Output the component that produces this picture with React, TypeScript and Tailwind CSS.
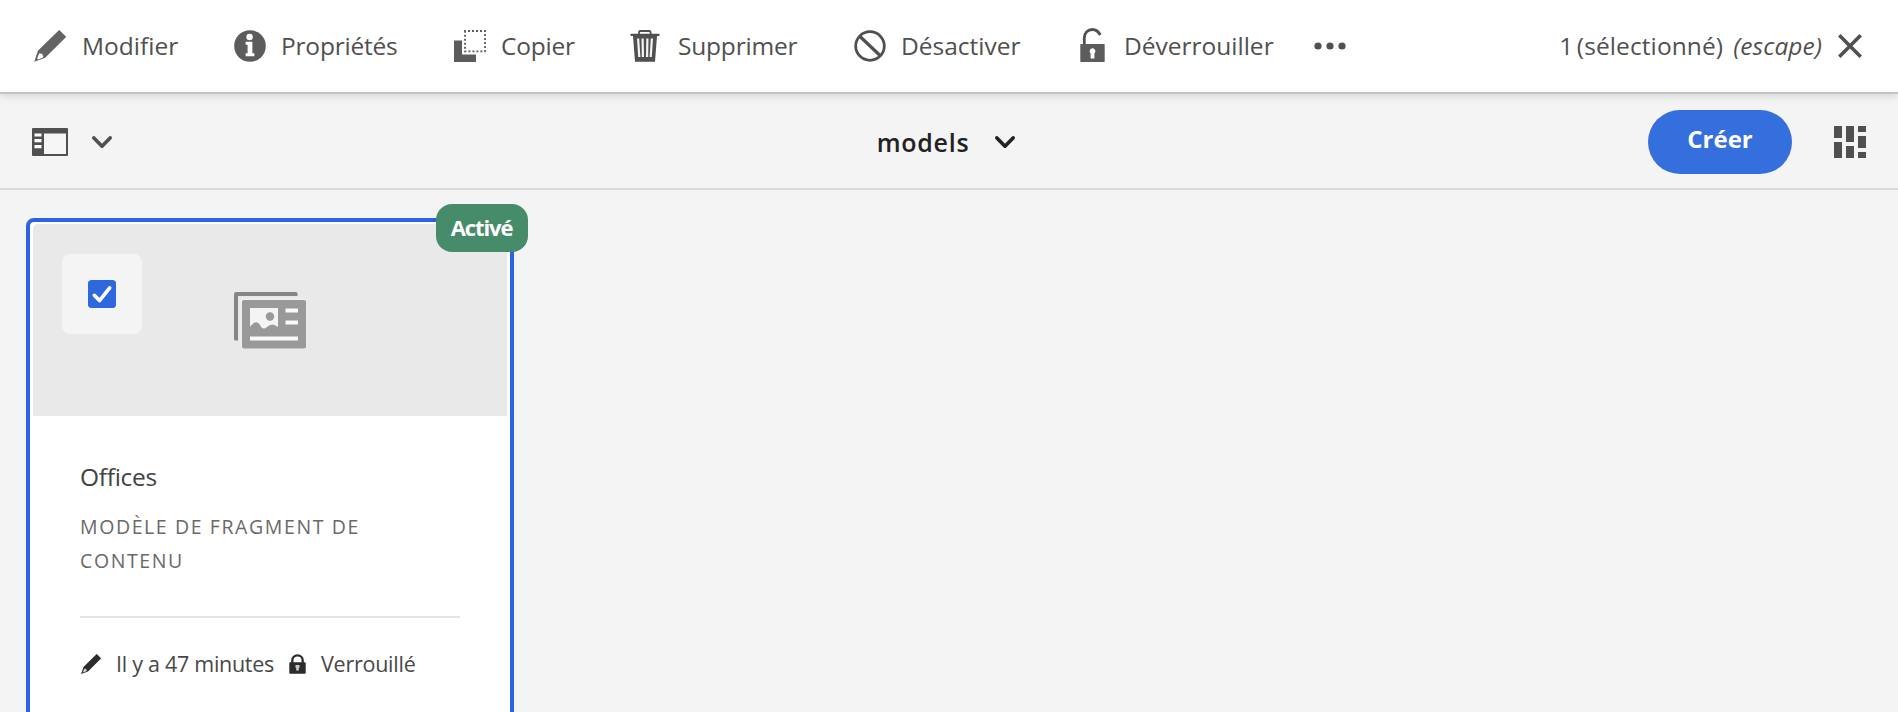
import type { ReactNode } from "react";

function Pencil({ className, tip }: { className: string; tip: string }) {
  return (
    <svg viewBox="0 0 32 32" className={className} fill="currentColor">
      <path d="M24.600 0.500a0.800 0.800 0 0 1 1.200 0L31.600 6.300a0.800 0.800 0 0 1 0 1.200L11.200 27.800 0.300 31.800 3.900 20.800Z" />
      <path d="M5.300 23.200 8.300 24 9.400 27.200 4.200 29.400 3.200 28.400Z" fill={tip} />
    </svg>
  );
}

function InfoIcon() {
  return (
    <svg viewBox="0 0 32 32" className="size-8 shrink-0 text-[#5c5c5c]">
      <circle cx="16" cy="16" r="15.800" fill="currentColor" />
      <circle cx="15.600" cy="7" r="3.200" fill="#fff" />
      <path d="M11.600 11.800h6.800v11.400h2v3H11.600v-3h2V14.800h-2z" fill="#fff" />
    </svg>
  );
}

function CopyIcon() {
  return (
    <svg viewBox="0 0 32 32" className="size-8 shrink-0 text-[#5c5c5c]">
      <path d="M0 10.500h8V24.500h14V32H0z" fill="currentColor" />
      <rect x="11" y="1" width="20" height="20.400" fill="none" stroke="currentColor" strokeWidth="1.800" strokeDasharray="2 2" strokeDashoffset="1" />
    </svg>
  );
}

function TrashIcon() {
  return (
    <svg viewBox="0 0 30 32" className="h-8 w-[30px] shrink-0" fill="none">
      <path d="M9 4.200V2.200Q9 1 10.200 1h9Q20.600 1 20.600 2.200V4.200" stroke="currentColor" strokeWidth="1.800" />
      <path d="M0.500 3.800H29.500V6H27L25 31.800H5L3 6H0.500z" fill="currentColor" />
      <path d="M8.100 8.500 9.300 27M12.600 8.500 12.900 27M17.400 8.500 17.100 27M21.900 8.500 20.700 27" stroke="#f4f4f4" strokeWidth="2.200" />
    </svg>
  );
}

function BanIcon() {
  return (
    <svg viewBox="0 0 32 32" className="size-8 shrink-0" fill="none" stroke="currentColor" strokeWidth="2.800">
      <circle cx="16" cy="16" r="14.300" />
      <path d="M6 6.500 26 25.500" strokeWidth="3.200" />
    </svg>
  );
}

function UnlockIcon() {
  return (
    <svg viewBox="0 0 25 35" className="mb-[2px] h-[35px] w-[25px] shrink-0">
      <path d="M4.300 17V10C4.300 4.500 8 1.500 12.300 1.500C16 1.500 18.500 3.500 20.300 7" fill="none" stroke="currentColor" strokeWidth="2.800" />
      <rect x="0.300" y="16" width="24.400" height="18" rx="0.800" fill="#5c5c5c" />
      <path d="M12.500 20.300a3 3 0 0 1 1.900 5.200V30.500h-3.800v-5a3 3 0 0 1 1.900-5.200z" fill="#fff" />
    </svg>
  );
}

function Chevron({ className }: { className: string }) {
  return (
    <svg viewBox="0 0 20 13" className={className} fill="none" stroke="currentColor" strokeWidth="3.600" strokeLinecap="round" strokeLinejoin="round">
      <path d="M1.900 1.900 10 10.200 18.100 1.900" />
    </svg>
  );
}

function RailIcon() {
  return (
    <svg viewBox="0 0 36 28" className="h-7 w-9">
      <rect width="36" height="28" rx="1" fill="currentColor" />
      <path d="M12 5.500H34V26H12z" fill="#f6f6f6" />
      <path d="M2.500 5.500H9.500V8.500H2.500zM2.500 11H9.500V14.300H2.500zM2.500 17H9.500V20.200H2.500z" fill="#fff" />
    </svg>
  );
}

function CardsIcon() {
  return (
    <svg viewBox="0 0 32 32" className="size-8 text-[#505050]" fill="currentColor">
      <path d="M0 0h8v12H0zM0 16h8v16H0zM12 0h8v16h-8zM12 20h8v12h-8zM24 0h8v6h-8zM24 10h8v12h-8zM24 26h8v6h-8z" />
    </svg>
  );
}

function ModelIcon() {
  return (
    <svg viewBox="0 0 72 57" className="h-[57px] w-[72px]">
      <path d="M0 2Q0 0 2 0H62Q63.500 0 63.500 1.500V4H4V48.500H1.500Q0 48.500 0 47z" fill="#868686" />
      <rect x="6.500" y="6.500" width="65" height="50" rx="2.500" fill="#efefef" />
      <rect x="8" y="8" width="64" height="48.500" rx="2" fill="#999" />
      <path d="M16 16H44V35Q38 30 33 35 29 38.500 26.500 34 22.500 26 16 35z" fill="#f4f4f4" />
      <circle cx="36" cy="24.500" r="4.200" fill="#999" />
      <path d="M51.500 16.500H64v4H51.500zM51.500 28.500H64v4H51.500zM16 44.500H64v4H16z" fill="#fafafa" />
    </svg>
  );
}

function LockIcon() {
  return (
    <svg viewBox="0 0 17 20" className="ml-[15px] h-5 w-[17px] shrink-0 text-[#2c2c2c]">
      <path d="M3.300 10V6.500C3.300 3.400 5.500 1.300 8.500 1.300s5.200 2.100 5.200 5.200V10" fill="none" stroke="currentColor" strokeWidth="2.300" />
      <rect x="0.300" y="8.300" width="16.400" height="11.500" rx="0.800" fill="currentColor" />
      <path d="M6.500 11h4v2.800H9.800V16.500H7.200V13.800H6.500z" fill="#ccc" />
    </svg>
  );
}

function Action({ icon, label, width, gap, spacing = "" }: { icon: ReactNode; label: string; width: string; gap: string; spacing?: string }) {
  return (
    <button className={`flex shrink-0 items-center ${width} ${gap}`}>
      {icon}
      <span className={`whitespace-nowrap ${spacing}`}>{label}</span>
    </button>
  );
}

export default function App() {
  return (
    <div className="flex h-[712px] w-full flex-col overflow-hidden bg-[#f4f4f4] font-['Open_Sans',sans-serif] text-[24.5px] leading-[32px] text-[#505050]">
      <header className="z-10 flex h-[94px] shrink-0 items-center border-b-2 border-[#c4c4c4] bg-white pl-[34px] shadow-[0_2px_8px_rgba(0,0,0,0.13)]">
        <Action icon={<Pencil className="size-8 shrink-0 text-[#636363]" tip="#fff" />} label="Modifier" width="w-[200px]" gap="gap-[16px]" />
        <Action icon={<InfoIcon />} label="Propriétés" width="w-[220px]" gap="gap-[15px]" spacing="tracking-[-0.2px]" />
        <Action icon={<CopyIcon />} label="Copier" width="w-[176px]" gap="gap-[15px]" spacing="tracking-[-0.2px]" />
        <Action icon={<TrashIcon />} label="Supprimer" width="w-[224px]" gap="gap-[18px]" spacing="tracking-[-0.2px]" />
        <Action icon={<BanIcon />} label="Désactiver" width="w-[226px]" gap="gap-[15px]" />
        <Action icon={<UnlockIcon />} label="Déverrouiller" width="w-[234px]" gap="gap-[19px]" />
        <svg viewBox="0 0 32 8" className="h-2 w-8 shrink-0" fill="currentColor">
          <circle cx="4" cy="4" r="3.600" />
          <circle cx="16" cy="4" r="3.600" />
          <circle cx="28" cy="4" r="3.600" />
        </svg>
        <div className="ml-auto flex items-center pr-[36px] whitespace-nowrap">
          <span className="tracking-[0.1px] [word-spacing:-3px]">1 (sélectionné)</span>
          <span className="ml-[10px] tracking-[0.1px] italic">(escape)</span>
          <svg viewBox="0 0 24 24" className="ml-[16px] size-6" fill="none" stroke="currentColor" strokeWidth="3.600">
            <path d="M1.300 1.300 22.700 22.700M22.700 1.300 1.300 22.700" />
          </svg>
        </div>
      </header>

      <nav className="grid h-[96px] shrink-0 grid-cols-[1fr_auto_1fr] items-center border-b-2 border-[#dadada] pt-[2px] pr-8 pl-8">
        <div className="flex items-center gap-6">
          <RailIcon />
          <Chevron className="h-[13px] w-5" />
        </div>
        <div className="mr-[6px] flex items-center gap-[26px] text-[#222]">
          <span className="-mt-px text-[25px] font-semibold tracking-[0.750px]">models</span>
          <Chevron className="h-[13px] w-5" />
        </div>
        <div className="flex items-center justify-end gap-[42px]">
          <button className="h-16 w-36 rounded-full bg-[#346fdd] pb-[6px] text-[24px] font-bold text-white">Créer</button>
          <CardsIcon />
        </div>
      </nav>

      <main className="flex grow px-[26px] pt-[28px]">
        <article className="relative flex h-[560px] w-[488px] shrink-0 flex-col rounded-[8px] border-4 border-[#2b63e3] bg-white px-[3px] pt-[2px]">
          <span className="absolute top-[-18px] right-[-18px] flex h-12 w-[92px] items-center justify-center rounded-[16px] bg-[#468c6b] pr-[1px] pb-[2px] text-[22px] font-bold tracking-[-1.100px] text-white">
            Activé
          </span>
          <div className="flex h-[192px] shrink-0 rounded-t-[5px] bg-[#e9e9e9] pt-[30px] pl-[29px]">
            <div className="flex h-20 w-20 items-center justify-center rounded-[8px] bg-[#f4f4f4]">
              <svg viewBox="0 0 28 28" className="size-7" fill="none">
                <rect width="28" height="28" rx="3.500" fill="#2f67df" />
                <path d="M6.300 15.300 11.500 20.600 21.700 7.800" stroke="#fff" strokeWidth="3.600" strokeLinecap="round" strokeLinejoin="round" />
              </svg>
            </div>
            <div className="pt-[38px] pl-[92px]">
              <ModelIcon />
            </div>
          </div>
          <div className="flex flex-col px-[47px] pt-[45px]">
            <h2 className="text-[24.5px] tracking-[-0.300px] text-[#424242]">Offices</h2>
            <p className="mt-[17px] text-[19.500px] leading-[34px] tracking-[1.600px] text-[#696969] uppercase">
              Modèle de fragment de contenu
            </p>
            <div className="mt-[38px] flex h-[94px] items-center border-t-2 border-[#e4e4e4] text-[21.5px] whitespace-nowrap text-[#484848]">
              <Pencil className="mt-[-1px] ml-[1px] size-5 shrink-0 text-[#2c2c2c]" tip="#ccc" />
              <span className="ml-[15px] tracking-[-0.280px]">Il y a 47 minutes</span>
              <LockIcon />
              <span className="ml-[15px] tracking-[-0.250px]">Verrouillé</span>
            </div>
          </div>
        </article>
      </main>
    </div>
  );
}
